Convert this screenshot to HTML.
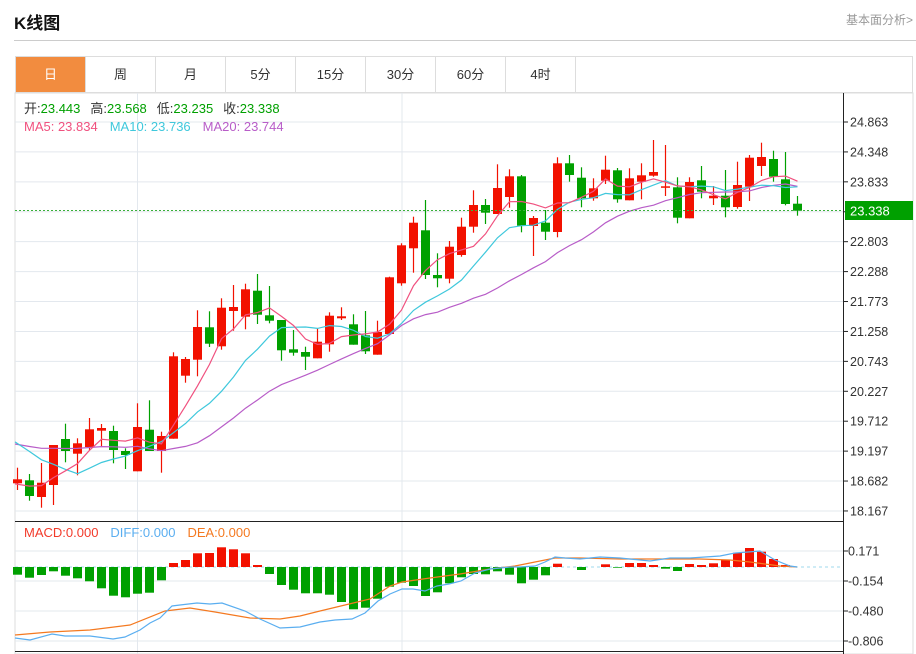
<!DOCTYPE html>
<html><head><meta charset="utf-8">
<style>
*{margin:0;padding:0;box-sizing:border-box}
body{width:916px;height:654px;overflow:hidden;background:#fff;font-family:"Liberation Sans","Noto Sans CJK SC",sans-serif;position:relative}
.title{position:absolute;left:14px;top:9px;font-size:17px;font-weight:bold;color:#111}
.more{position:absolute;right:3px;top:11px;font-size:12px;color:#999}
.sep{position:absolute;left:14px;right:0;top:40px;border-top:1px solid #ccc}
.tabs{position:absolute;left:15px;top:56px;width:898px;height:37px;border:1px solid #ddd;display:flex}
.tabs div{width:70px;height:35px;line-height:35px;text-align:center;font-size:13px;color:#333;border-right:1px solid #ddd}
.tabs div.on{background:#f28c3f;color:#fff}
svg{position:absolute;left:0;top:0}
</style></head><body>
<div class="title">K线图</div>
<div class="more">基本面分析&gt;</div>
<div class="sep"></div>
<div class="tabs"><div class="on">日</div><div>周</div><div>月</div><div>5分</div><div>15分</div><div>30分</div><div>60分</div><div>4时</div></div>
<svg id="s" width="916" height="654" xmlns="http://www.w3.org/2000/svg" font-family="Liberation Sans, Noto Sans CJK SC, sans-serif"></svg>
<script>
var NS="http://www.w3.org/2000/svg",s=document.getElementById('s'),h='';
// grid
h+='<rect x="15" y="93" width="898" height="561" fill="none" stroke="#ddd"/>';
for(var k=0;k<14;k++){var y=122+29.92*k;h+='<line x1="15" x2="843" y1="'+y+'" y2="'+y+'" stroke="#e3e8ee"/>';}
[551,581,611,641].forEach(function(y){h+='<line x1="15" x2="843" y1="'+y+'" y2="'+y+'" stroke="#e3e8ee"/>';});
[137.5,402].forEach(function(x){h+='<line x1="'+x+'" x2="'+x+'" y1="93" y2="654" stroke="#e3e8ee"/>';});
h+='<line x1="843.5" x2="843.5" y1="93" y2="654" stroke="#222"/>';
h+='<line x1="15" x2="843" y1="521.5" y2="521.5" stroke="#222"/>';
h+='<line x1="15" x2="843" y1="651.5" y2="651.5" stroke="#222"/>';
var labs=['24.863','24.348','23.833','23.318','22.803','22.288','21.773','21.258','20.743','20.227','19.712','19.197','18.682','18.167'];
labs.forEach(function(t,k){var y=122+29.92*k;h+='<line x1="843" x2="848" y1="'+y+'" y2="'+y+'" stroke="#222"/>';if(k!=3)h+='<text x="850" y="'+(y+4.5)+'" font-size="12.5" fill="#333">'+t+'</text>';});
[['0.171',551],['-0.154',581],['-0.480',611],['-0.806',641]].forEach(function(a){h+='<line x1="843" x2="848" y1="'+a[1]+'" y2="'+a[1]+'" stroke="#222"/><text x="848" y="'+(a[1]+4.5)+'" font-size="12.5" fill="#333">'+a[0]+'</text>';});
// candles: [o,c,hi,lo] pixel y; red if c<o(top)
var C=[[483.3,479.3,467.7,490],[480.3,496,474,500.7],[497,482.7,463,507.7],[485,445,445,505],[439,451,423.7,462.3],[453.7,443.3,438.3,475.3],[447,429.3,418,450],[430.7,428,424,446],[431,450,425.7,463.3],[451,455,448.3,469],[471.3,427,403.3,471.3],[429.7,451,400.3,451],[451,436,431.7,472.7],[438.7,356.3,352.3,438.7],[375.7,359,357,382.7],[359.7,327,310.3,376.3],[327.3,343.7,311.3,347],[346.3,307.7,298.3,349.7],[311,307,285,330.7],[316.7,289.3,283.7,329.3],[290.7,314.7,274,324],[315.3,320.7,286,323.3],[320,350.3,320,360.7],[349.3,352.7,330,355.7],[352,356.7,346.7,370],[358.3,341.7,328.3,358.3],[344.3,315.7,312.3,351.7],[318.3,316.3,307.3,320],[324.3,344.7,314.3,344.7],[335.3,351.3,311,354],[354.7,332,320.7,354.7],[334,277.3,276.7,334],[283.3,245.3,243.3,285.7],[248.3,222.7,216.7,272.7],[230.3,275,200,279],[275,278.3,253.3,287.3],[278.7,246.7,241,283.3],[255,226.7,217.7,256.7],[226.7,205,190.3,232.7],[205,212.7,199,224],[214,188,164.3,214],[197,176.3,169.3,207.7],[176.3,225.7,175,232.3],[226,218,216,256],[222.7,231.7,210,240],[232,163.3,157.3,237.3],[163.3,175,155,181.7],[177.7,198.3,167.3,207.3],[198.3,188.3,178.3,200.7],[180.7,169.7,155.7,184],[170.3,199.3,168,202.7],[200.3,178.3,168.3,200.3],[181.7,175.3,163.3,199.3],[175.7,172,140,176.7],[187.3,186.3,145,196],[187.3,217.7,177.3,223.3],[218.3,182,177.3,218.3],[180.3,191.7,166,198.3],[198.3,195.7,186,205],[195.7,207.3,170,217.3],[207,185,161.7,208.7],[186.7,157.7,155,201],[166,157,142.7,176],[159,176.7,150.7,181.7],[179.3,204,152,205.3],[203.7,210.7,196,215.7]];
var X=function(i){return 17.5+12*i;};
// MAs
var pad=[];for(var i=0;i<10;i++)pad.push(446);for(i=0;i<5;i++)pad.push(400);for(i=0;i<4;i++)pad.push(485);
var cl=pad.concat(C.map(function(c){return c[1];}));
function ma(n,col){var p='';for(var i=0;i<C.length;i++){var j=i+19,sm=0;for(var q=0;q<n;q++)sm+=cl[j-q];var y=sm/n;p+=(i?'L':'M')+(i?X(i):15)+' '+y.toFixed(1);}h+='<path d="'+p+'" fill="none" stroke="'+col+'" stroke-width="1.2"/>';}
var body='';
C.forEach(function(c,i){var x=X(i),red=c[1]<c[0],col=red?'#f21100':'#00a000',t=Math.min(c[0],c[1]),b=Math.max(c[0],c[1]);if(b-t<1.5)b=t+1.5;
body+='<line x1="'+x+'" x2="'+x+'" y1="'+c[2]+'" y2="'+c[3]+'" stroke="'+col+'" stroke-width="1.2"/><rect x="'+(x-4.5)+'" y="'+t+'" width="9" height="'+(b-t)+'" fill="'+col+'"/>';});
h+=body;
ma(20,'#b85dc8');ma(10,'#3fc8dc');ma(5,'#f0517f');
h+='<line x1="15" x2="843" y1="210.5" y2="210.5" stroke="#3ab03a" stroke-dasharray="2,2"/>';
h+='<rect x="845" y="201" width="68" height="19" fill="#00a000"/><text x="850" y="215.5" font-size="13" fill="#fff">23.338</text>';
// MACD bars
var M=[574.7,577.7,575,571.3,575.7,578.3,581.3,588.3,595.7,597.3,593.7,592.7,580.3,563,560,553.3,553,547.3,549.3,553.3,565,574,585,589.7,593.3,593.3,594.7,602,609.3,607.7,598.7,586.7,582.7,586,596,592.3,583.3,577.3,574,574.3,571.3,574.7,583.3,579.7,575.3,563.7,567.3,570,567,564.3,567.7,563,563,565,568.7,571,564,565,563.3,560,552.7,548,551.7,559,565,567];
var Z=567;
h+='<line x1="15" x2="843" y1="'+Z+'" y2="'+Z+'" stroke="#9fd8ee" stroke-dasharray="3,3"/>';
M.forEach(function(v,i){var x=X(i);if(Math.abs(v-Z)<0.5)return;var col=v<Z?'#f21100':'#00a000';h+='<rect x="'+(x-4.5)+'" y="'+Math.min(v,Z)+'" width="9" height="'+Math.abs(v-Z)+'" fill="'+col+'"/>';});
var D='15,638 30,640 52,634 65,636 90,636 113,639 125,637 140,630 150,623 160,618 172,606 180,605 197,603 210,604 222,603 245,611 260,619 280,628 300,627 320,622 335,620 352,619 365,613 378,601 390,594 402,589 413,589 425,591 437,586 449,584 461,581 475,573 490,569 510,567 520,567 535,566 545,562 555,557 565,558 580,559 600,557 620,558 640,560 650,561 670,558 690,558 720,556 735,553 748,552 760,551 775,560 790,566 797,567';
var E='15,635 50,632 90,630 130,625 165,611 190,608 215,612 250,618 280,619 300,616 320,611 345,605 370,599 390,586 402,582 430,578 460,574 490,569 515,566 555,558 580,558 620,559 660,559 700,559 730,560 750,562 765,564 780,566 797,567';
h+='<polyline points="'+E+'" fill="none" stroke="#f47920" stroke-width="1.2"/>';
h+='<polyline points="'+D+'" fill="none" stroke="#5aaef0" stroke-width="1.2"/>';
// legends
h+='<text x="24" y="113" font-size="13"><tspan fill="#333">开:</tspan><tspan fill="#00a000">23.443</tspan><tspan fill="#333" dx="10">高:</tspan><tspan fill="#00a000">23.568</tspan><tspan fill="#333" dx="10">低:</tspan><tspan fill="#00a000">23.235</tspan><tspan fill="#333" dx="10">收:</tspan><tspan fill="#00a000">23.338</tspan></text>';
h+='<text x="24" y="131" font-size="13"><tspan fill="#f0517f">MA5: 23.834</tspan><tspan fill="#3fc8dc" dx="12">MA10: 23.736</tspan><tspan fill="#b85dc8" dx="12">MA20: 23.744</tspan></text>';
h+='<text x="24" y="537" font-size="13"><tspan fill="#f23a2a">MACD:0.000</tspan><tspan fill="#5aaef0" dx="12">DIFF:0.000</tspan><tspan fill="#f47920" dx="12">DEA:0.000</tspan></text>';
s.innerHTML=h;
</script>
</body></html>
